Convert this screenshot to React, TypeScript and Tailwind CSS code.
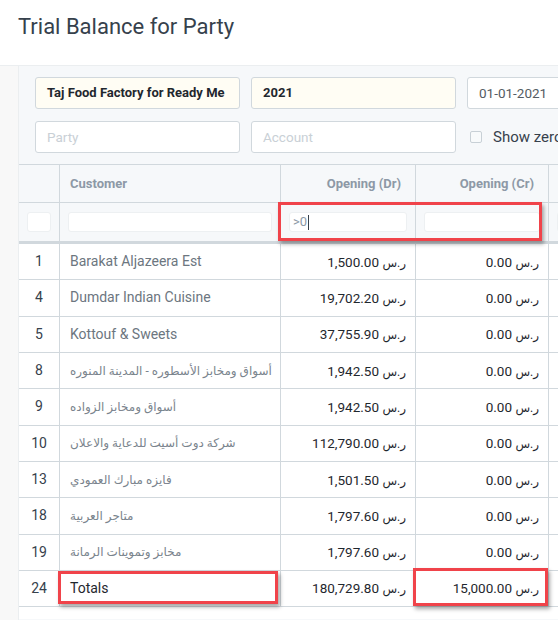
import React from "react";

type Row = { n: string; name: string; ar?: boolean; dr: string; cr: string; total?: boolean };

const rows: Row[] = [
  { n: "1", name: "Barakat Aljazeera Est", dr: "1,500.00", cr: "0.00" },
  { n: "4", name: "Dumdar Indian Cuisine", dr: "19,702.20", cr: "0.00" },
  { n: "5", name: "Kottouf & Sweets", dr: "37,755.90", cr: "0.00" },
  { n: "8", name: "أسواق ومخابز الأسطوره - المدينة المنوره", ar: true, dr: "1,942.50", cr: "0.00" },
  { n: "9", name: "أسواق ومخابز الزواده", ar: true, dr: "1,942.50", cr: "0.00" },
  { n: "10", name: "شركة دوت أسيت للدعاية والاعلان", ar: true, dr: "112,790.00", cr: "0.00" },
  { n: "13", name: "فايزه مبارك العمودي", ar: true, dr: "1,501.50", cr: "0.00" },
  { n: "18", name: "متاجر العربية", ar: true, dr: "1,797.60", cr: "0.00" },
  { n: "19", name: "مخابز وتموينات الرمانة", ar: true, dr: "1,797.60", cr: "0.00" },
  { n: "24", name: "Totals", dr: "180,729.80", cr: "15,000.00", total: true },
];

const font = { fontFamily: "Roboto, 'DejaVu Sans', sans-serif" };

function Amount({ v }: { v: string }) {
  return (
    <span className="whitespace-nowrap text-[13.5px] text-[#1f272e]">
      {v} <span className="text-[12px]">ر.س</span>
    </span>
  );
}

export default function App() {
  return (
    <div className="relative w-[558px] h-[620px] overflow-hidden bg-white" style={font}>
      {/* Page header */}
      <div className="h-[66px] border-b border-[#ebeef0] pl-[18px] pt-[12px]">
        <h1 className="text-[22px] leading-[30px] text-[#36414c] font-normal">Trial Balance for Party</h1>
      </div>

      <div className="flex h-[554px]">
        <div className="w-[19px] shrink-0 bg-[#f8f8f8] border-r border-[#ebeef0]" />
        <div className="flex-1 min-w-0 bg-[#f6f8fa] overflow-hidden">
          {/* Filters */}
          <div className="pl-[16px] pt-[11px] pb-[11px]">
            <div className="grid grid-cols-[205px_205px_205px] gap-x-[11px] gap-y-[12px] w-max">
              <div className="h-[32px] rounded-[3px] border border-[#d1d8dd] bg-[#fffdf4] pl-[11px] flex items-center text-[13px] font-bold text-[#1f272e] whitespace-nowrap overflow-hidden">
                Taj Food Factory for Ready Me
              </div>
              <div className="h-[32px] rounded-[3px] border border-[#d1d8dd] bg-[#fffdf4] pl-[11px] flex items-center text-[13px] font-bold text-[#1f272e]">
                2021
              </div>
              <div className="h-[32px] rounded-[3px] border border-[#d1d8dd] bg-white pl-[11px] flex items-center text-[13.5px] text-[#555c63]">
                01-01-2021
              </div>
              <div className="h-[32px] rounded-[3px] border border-[#d1d8dd] bg-white pl-[11px] flex items-center text-[13.5px] text-[#c9d0d6]">
                Party
              </div>
              <div className="h-[32px] rounded-[3px] border border-[#d1d8dd] bg-white pl-[11px] flex items-center text-[13.5px] text-[#c9d0d6]">
                Account
              </div>
              <div className="h-[32px] flex items-center pl-[3px] gap-[11px]">
                <span className="w-[12px] h-[12px] rounded-[2px] border border-[#c8d0d6] bg-[#f8fafb]" />
                <span className="text-[15px] text-[#36414c] whitespace-nowrap">Show zero values</span>
              </div>
            </div>
          </div>

          {/* Table */}
          <div className="w-max border-t border-[#d1d8dd]">
            <div className="grid grid-cols-[41px_221px_135px_133px_135px] h-[38px] bg-[#f6f8fa] border-b border-[#d1d8dd] text-[13px] font-bold text-[#8d99a6]">
              <div className="border-r border-[#d1d8dd]" />
              <div className="border-r border-[#d1d8dd] flex items-center pl-[10px]">Customer</div>
              <div className="border-r border-[#d1d8dd] flex items-center justify-end pr-[14px]">Opening (Dr)</div>
              <div className="border-r border-[#d1d8dd] flex items-center justify-end pr-[14px]">Opening (Cr)</div>
              <div />
            </div>
            <div className="grid grid-cols-[41px_221px_135px_133px_135px] h-[41px] bg-[#f6f8fa] border-b-[3px] border-[#d1d8dd]">
              {[0, 1, 2, 3, 4].map((i) => (
                <div key={i} className={`flex items-center px-[8px] ${i < 4 ? "border-r border-[#d1d8dd]" : ""}`}>
                  <div className="h-[20px] w-full rounded-[3px] border border-[#edf0f2] bg-white flex items-center pl-[3px] text-[13px] text-[#8d99a6]">
                    {i === 2 ? (
                      <>
                        {">0"}
                        <span className="inline-block w-[1px] h-[15px] bg-[#36414c] ml-[1px]" />
                      </>
                    ) : null}
                  </div>
                </div>
              ))}
            </div>
            {rows.map((r) => (
              <div
                key={r.n}
                className="grid grid-cols-[41px_221px_135px_133px_135px] h-[36.33px] bg-white border-b border-[#d1d8dd]"
              >
                <div className="border-r border-[#d1d8dd] flex items-center justify-center text-[14px] text-[#36414c]">
                  {r.n}
                </div>
                <div
                  className={`border-r border-[#d1d8dd] flex items-center pl-[10px] whitespace-nowrap overflow-hidden ${
                    r.total ? "text-[14px] text-[#1f272e]" : r.ar ? "text-[12px] text-[#7a848d]" : "text-[14px] text-[#6c7680]"
                  }`}
                >
                  {r.ar ? <span dir="rtl">{r.name}</span> : r.name}
                </div>
                <div className="border-r border-[#d1d8dd] flex items-center justify-end pr-[9px]">
                  <Amount v={r.dr} />
                </div>
                <div className="border-r border-[#d1d8dd] flex items-center justify-end pr-[9px]">
                  <Amount v={r.cr} />
                </div>
                <div />
              </div>
            ))}
            <div className="h-[12px] bg-white" />
          </div>
        </div>
      </div>

      {/* Red highlight boxes */}
      <div className="absolute left-[278px] top-[202px] w-[264px] h-[39px] border-[3px] border-[#f0434a] shadow-[2px_3px_4px_rgba(0,0,0,0.35)]" />
      <div className="absolute left-[58px] top-[571px] w-[220px] h-[33px] border-[3px] border-[#f0434a] shadow-[2px_3px_4px_rgba(0,0,0,0.35)]" />
      <div className="absolute left-[413px] top-[568px] w-[135px] h-[38px] border-[3px] border-[#f0434a] shadow-[2px_3px_4px_rgba(0,0,0,0.35)]" />
    </div>
  );
}
